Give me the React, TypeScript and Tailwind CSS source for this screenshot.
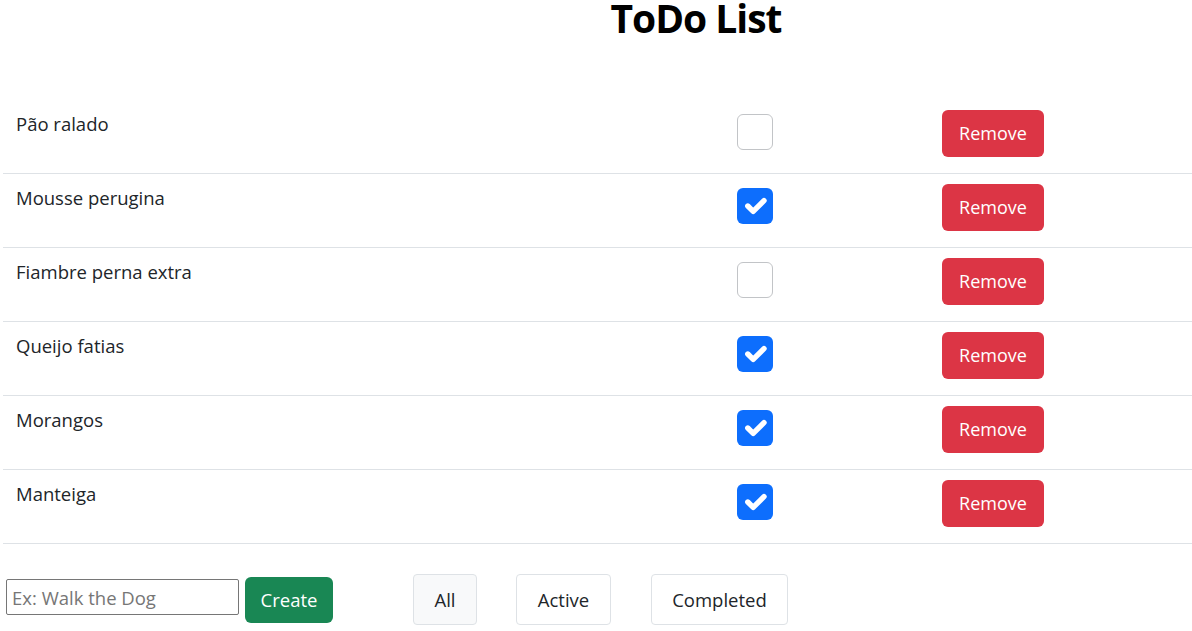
const TODOS = [
  { text: "Pão ralado", done: false },
  { text: "Mousse perugina", done: true },
  { text: "Fiambre perna extra", done: false },
  { text: "Queijo fatias", done: true },
  { text: "Morangos", done: true },
  { text: "Manteiga", done: true },
];

function Checkbox({ checked }: { checked: boolean }) {
  if (!checked) {
    return <div className="w-[36px] h-[36px] rounded-[6px] border border-[#c2c4c7] bg-white" />;
  }
  return (
    <div className="w-[36px] h-[36px] rounded-[6px] bg-[#0d6efd] flex items-center justify-center">
      <svg viewBox="0 0 20 20" className="w-[36px] h-[36px]">
        <path d="m6 10 3 3 6-6" fill="none" stroke="#fff" strokeWidth="3" strokeLinecap="round" strokeLinejoin="round" />
      </svg>
    </div>
  );
}

export default function App() {
  return (
    <div className="w-full min-h-screen bg-white text-[#212529] font-['Open_Sans',_'Noto_Sans',_sans-serif]">
      {/* Title */}
      <h1 className="pl-[200px] text-center text-[39px] leading-[36px] tracking-[-1px] font-bold text-black mb-[64px]">ToDo List</h1>

      {/* List */}
      <div className="ml-[3px]">
        {TODOS.map(todo => (
          <div key={todo.text} className="flex h-[74px] border-b border-[#dee2e6]">
            <div className="w-[721px] px-[13px] pt-[10px] text-[18.5px] leading-[28px]">{todo.text}</div>
            <div className="w-[205px] pl-[13px] pt-[14px]">
              <Checkbox checked={todo.done} />
            </div>
            <div className="pl-[13px] pt-[10px]">
              <button className="w-[102px] h-[47px] rounded-[6px] bg-[#dc3545] text-white text-[18px] flex items-center justify-center">
                Remove
              </button>
            </div>
          </div>
        ))}
      </div>

      {/* Footer controls */}
      <div className="flex items-start pl-[6px] mt-[30px]">
        <input
          placeholder="Ex: Walk the Dog"
          className="mt-[5px] w-[233px] h-[36px] border border-[#767676] rounded-[2px] px-[5px] text-[18.5px] placeholder:text-[#767676] outline-none"
        />
        <button className="ml-[6px] mt-[3px] w-[88px] h-[46px] rounded-[6px] bg-[#198754] text-white text-[18.5px] flex items-center justify-center">
          Create
        </button>
        <button className="ml-[80px] w-[64px] h-[51px] rounded-[4px] border border-[#dee2e6] bg-[#f8f9fa] text-[18.5px] flex items-center justify-center">
          All
        </button>
        <button className="ml-[39px] w-[95px] h-[51px] rounded-[4px] border border-[#dee2e6] bg-white text-[18.5px] flex items-center justify-center">
          Active
        </button>
        <button className="ml-[40px] w-[137px] h-[51px] rounded-[4px] border border-[#dee2e6] bg-white text-[18.5px] flex items-center justify-center">
          Completed
        </button>
      </div>
    </div>
  );
}
